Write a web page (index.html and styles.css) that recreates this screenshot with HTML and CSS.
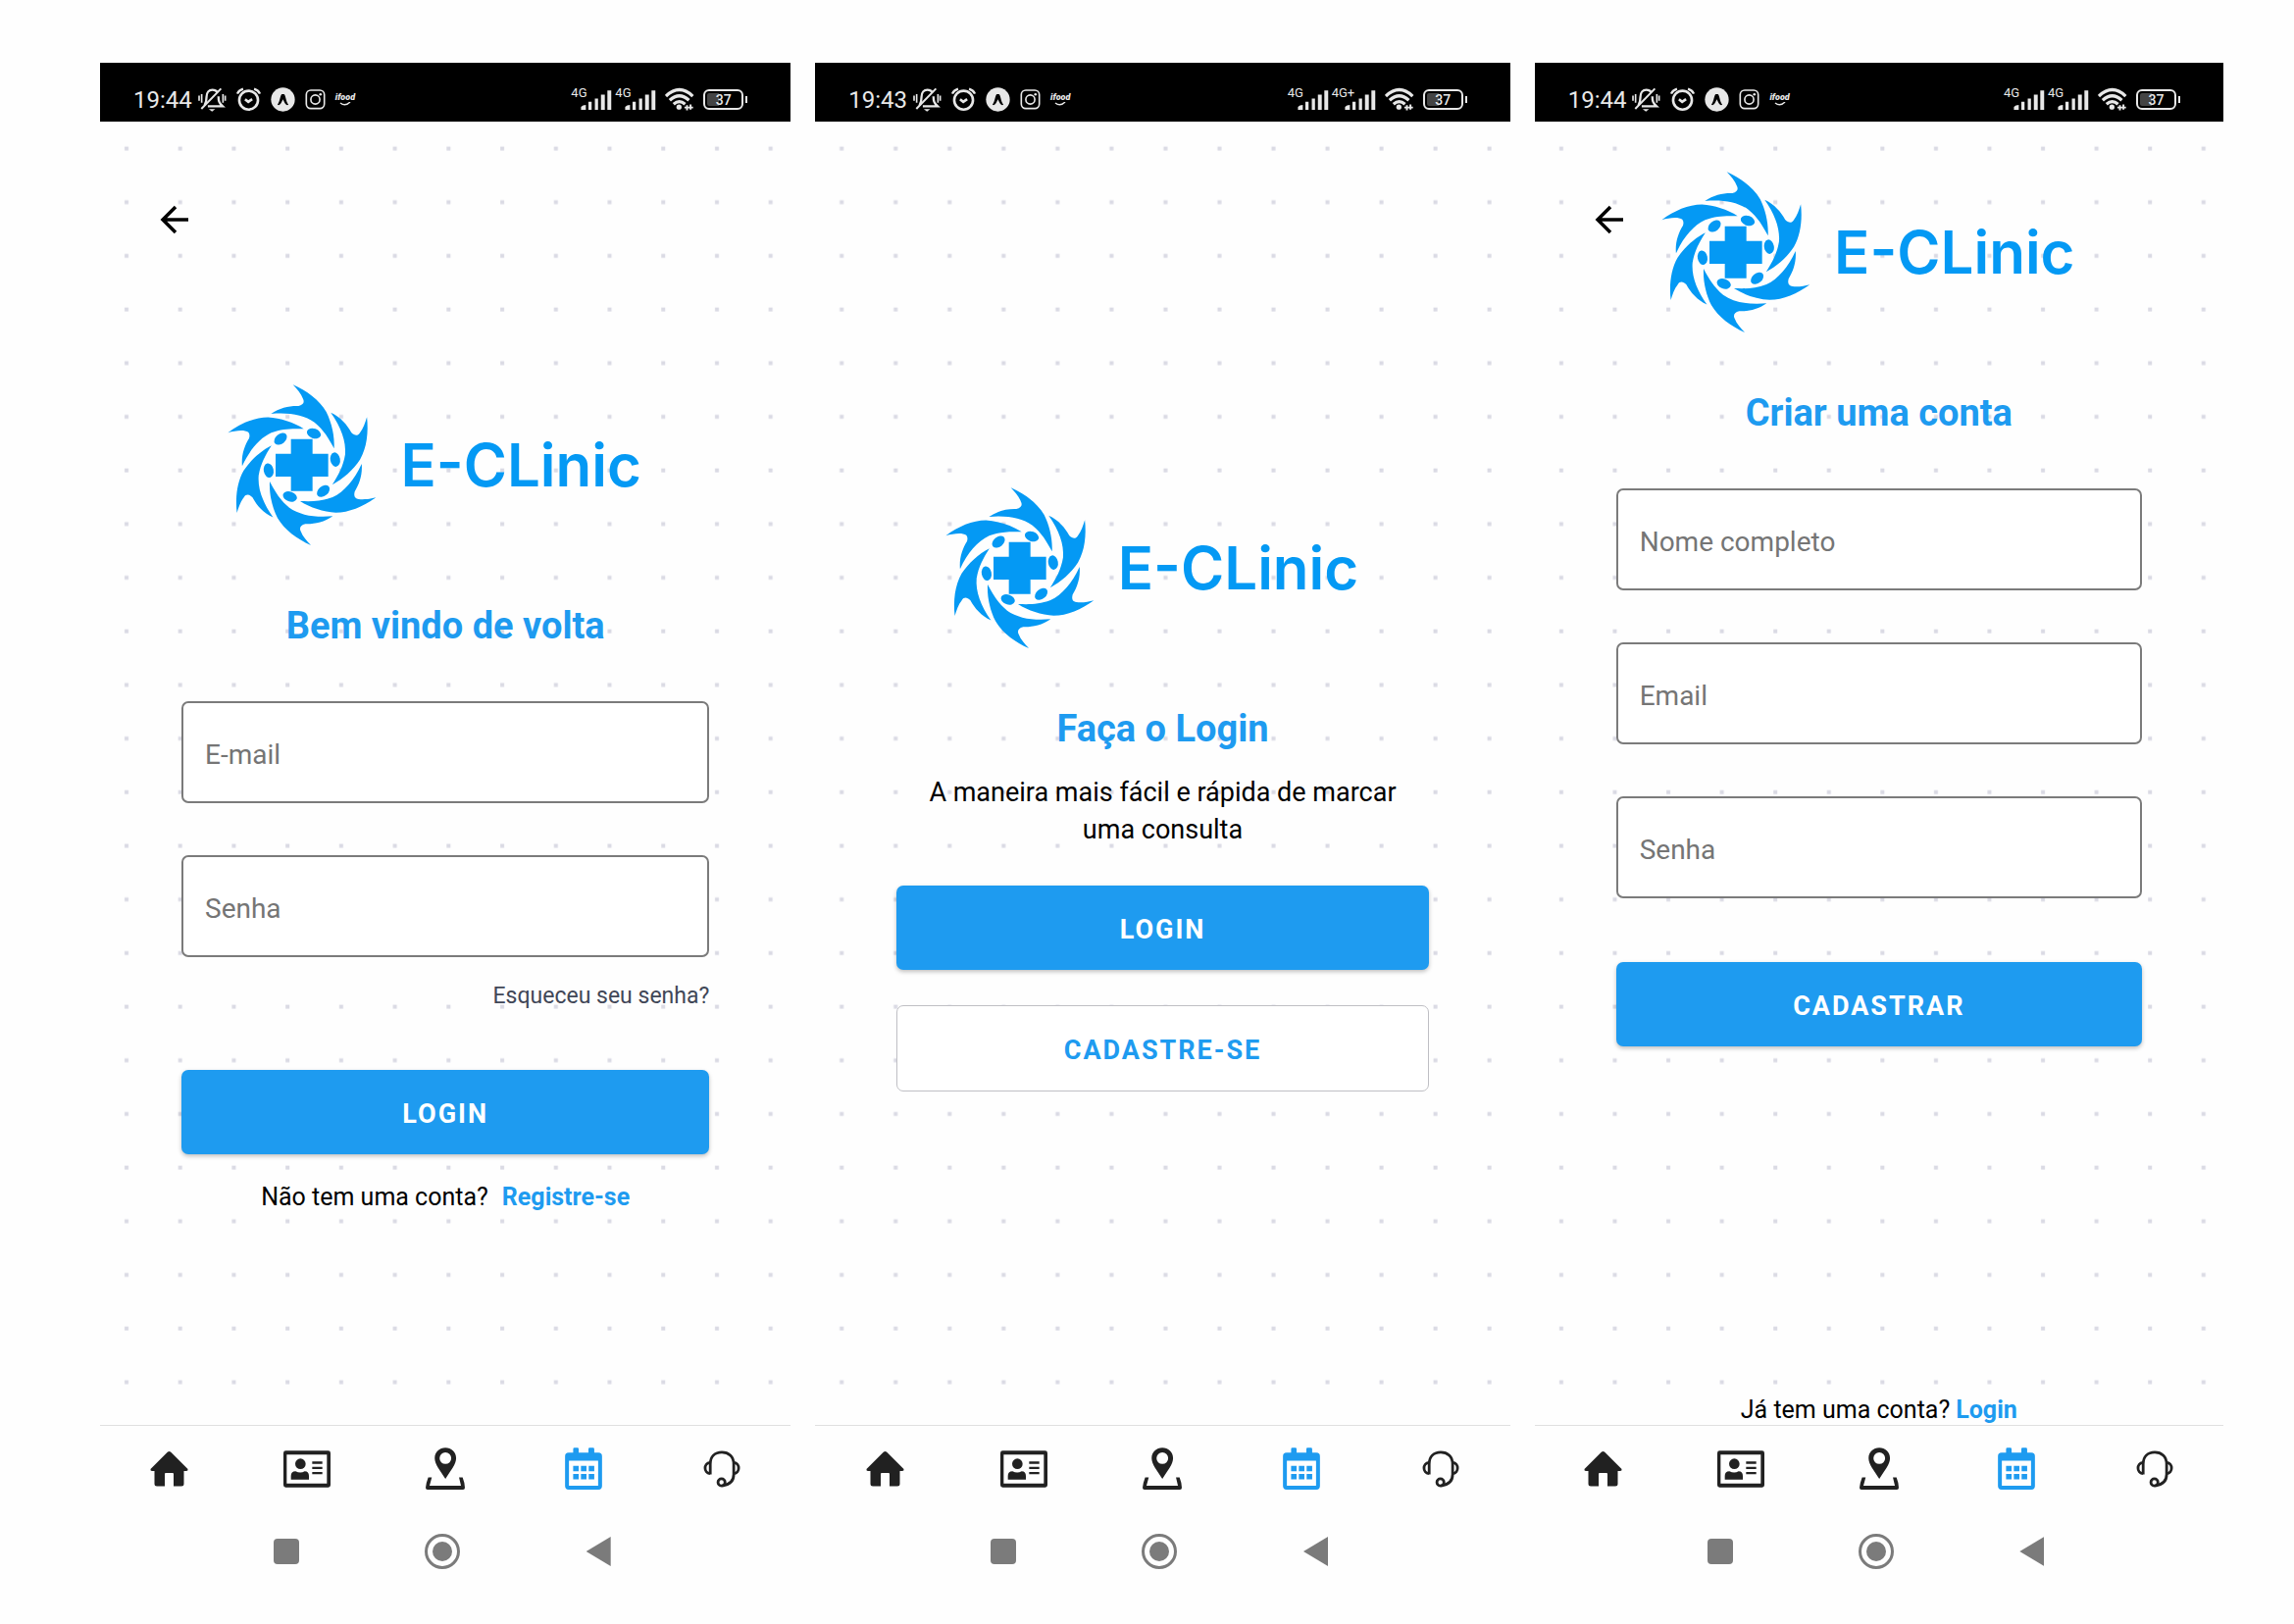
FILE: index.html
```html
<!DOCTYPE html>
<html lang="pt-BR">
<head>
<meta charset="utf-8">
<meta name="viewport" content="width=device-width, initial-scale=1">
<title>E-CLinic</title>
<link rel="stylesheet" href="styles.css">
</head>
<body>
<svg class="sprite" aria-hidden="true">
  <defs>
    <g id="person">
      <path d="M245 37C288 56 326 84 347 120C364 154 373 195 371 232C354 200 340 176 311 152C278 129 232 121 178 126C205 107 235 101 262 102C277 98 281 90 276 80C270 64 257 50 245 37Z"/>
      <ellipse cx="309" cy="186" rx="22" ry="15" transform="rotate(20 309 186)"/>
    </g>
    <symbol id="mark" viewBox="46 36 454 492">
      <use href="#person"/>
      <use href="#person" transform="rotate(60 272.500 282.500)"/>
      <use href="#person" transform="rotate(120 272.500 282.500)"/>
      <use href="#person" transform="rotate(180 272.500 282.500)"/>
      <use href="#person" transform="rotate(240 272.500 282.500)"/>
      <use href="#person" transform="rotate(300 272.500 282.500)"/>
      <path d="M239 203H305V248H353V318H305V362H239V318H192V248H239Z"/>
    </symbol>
    <symbol id="bell" viewBox="216 20 88 76">
      <g fill="none" stroke="currentColor" stroke-width="7">
        <path d="M236 76C242 66 242 62 242 50C242 36 250 28 260 28C266 28 272 30 275 35M279 48C279 62 280 68 292 79H246"/>
        <path d="M226 87L287 24" stroke-width="6"/>
        <path d="M219 46V62M227 41V68M293 41V68M300 46V62" stroke-width="5"/>
      </g>
      <path d="M249 88H269L259 95Z"/>
    </symbol>
    <symbol id="alarm" viewBox="332 20 76 72">
      <g fill="none" stroke="currentColor" stroke-width="8">
        <circle cx="370" cy="58" r="29"/>
        <path d="M335 38Q340 27 353 23M405 38Q400 27 387 23" stroke-width="7"/>
        <path d="M359 55L369 63L381 55"/>
      </g>
    </symbol>
    <symbol id="expo" viewBox="434 20 72 72">
      <circle cx="470" cy="56" r="35"/>
      <path d="M454 71C462 61 462 42 467 40H473C478 42 478 61 486 71C481 75 476 69 470 55C464 69 459 75 454 71Z" fill="#000"/>
    </symbol>
    <symbol id="camera" viewBox="537 25 62 64">
      <g fill="none" stroke="currentColor" stroke-width="5">
        <rect x="540" y="28" width="56" height="57" rx="14"/>
        <circle cx="568" cy="57" r="14"/>
      </g>
      <circle cx="584" cy="41" r="4"/>
    </symbol>
    <symbol id="smile" viewBox="0 0 12 4">
      <path d="M1 1Q6 5 11 0" fill="none" stroke="currentColor" stroke-width="1.500"/>
    </symbol>
    <symbol id="bars" viewBox="55 26 95 61">
      <path d="M55 87V78Q60 72 70 72V87ZM78 62H88V87H78ZM98 52H108V87H98ZM117 40H129V87H117ZM137 27H149V87H137Z"/>
    </symbol>
    <symbol id="wifi" viewBox="310 20 92 72">
      <g fill="none" stroke="currentColor" stroke-width="10">
        <path d="M313 47Q355 7 397 47"/>
        <path d="M325 60Q355 32 385 60"/>
        <path d="M337 72Q355 56 373 72"/>
      </g>
      <circle cx="354" cy="81" r="8"/>
      <path d="M376 75H382V91H376ZM387 73H393V89H387ZM371 80H398V85H371Z"/>
    </symbol>
    <symbol id="back" viewBox="0 0 30 30">
      <path d="M29 15H3M16 2L3 15L16 28" fill="none" stroke="currentColor" stroke-width="3.500"/>
    </symbol>
    <symbol id="home" viewBox="0 0 39 36">
      <path d="M19.500 0Q21 0 22.500 2L38.500 18Q39 20 37 20H34.500V33Q34.500 35.500 32 35.500H24V23Q24 22 23 22H16Q15 22 15 23V35.500H7Q4.500 35.500 4.500 33V20H2Q0 20 .500 18L16.500 2Q18 0 19.500 0Z"/>
    </symbol>
    <symbol id="card" viewBox="57 41 144 112">
      <path fill-rule="evenodd" d="M64 41H194Q201 41 201 48V146Q201 153 194 153H64Q57 153 57 146V48Q57 41 64 41ZM67 53V141H190V53Z"/>
      <circle cx="109" cy="81" r="16"/>
      <path d="M80 129V118Q80 104 94 104Q109 111 122 104Q135 104 135 118V129ZM145 74H176V81H145ZM145 90H176V97H145ZM145 106H176V113H145Z"/>
    </symbol>
    <symbol id="pin" viewBox="489 32 121 130">
      <path fill-rule="evenodd" d="M550 33C568 33 583 46 583 65C583 84 566 103 550 129C534 103 517 84 517 65C517 46 532 33 550 33ZM550 47A18 18 0 1 0 550 83A18 18 0 1 0 550 47Z"/>
      <path d="M497 124H508L501 150H598L592 124H603Q610 142 610 156Q610 162 604 162H495Q489 162 489 156Q490 142 497 124Z"/>
    </symbol>
    <symbol id="calendar" viewBox="915 32 114 130">
      <path fill-rule="evenodd" d="M926 48H940V37Q940 33 944 33H953Q957 33 957 37V48H987V37Q987 33 991 33H1001Q1005 33 1005 37V48H1018Q1029 48 1029 59V151Q1029 162 1018 162H926Q915 162 915 151V59Q915 48 926 48ZM927 73V150H1017V73Z"/>
      <path d="M940 89H957V105H940ZM964 89H981V105H964ZM988 89H1005V105H988ZM940 114H957V130H940ZM964 114H981V130H964ZM988 114H1005V130H988Z"/>
    </symbol>
    <symbol id="headset" viewBox="1337 39 116 116">
      <g fill="none" stroke="currentColor" stroke-width="8.500">
        <path d="M1359 114V82C1359 58 1374 45 1395 45C1416 45 1432 58 1432 82V114C1432 134 1420 146 1396 149"/>
        <path d="M1358 77C1338 79 1338 109 1358 111M1433 77C1452 79 1452 109 1433 111"/>
        <circle cx="1394" cy="138" r="11"/>
      </g>
    </symbol>
    <pattern id="dots" width="54.700" height="54.690" patternUnits="userSpaceOnUse">
      <rect x="25" y="25.500" width="4" height="4" fill="#dadae4"/>
    </pattern>
  </defs>
</svg>

<main class="gallery">
  <section class="phone" aria-label="Entrar">
    <header class="status">
      <div class="status-left">
        <time>19:44</time>
        <svg class="i-bell"><use href="#bell"/></svg>
        <svg class="i-alarm"><use href="#alarm"/></svg>
        <svg class="i-alarm"><use href="#expo"/></svg>
        <svg class="i-camera"><use href="#camera"/></svg>
        <div class="ifood"><span>ifood</span><svg><use href="#smile"/></svg></div>
      </div>
      <div class="status-right">
        <div class="signals">
          <div class="signal"><span>4G</span><svg><use href="#bars"/></svg></div>
          <div class="signal"><span>4G</span><svg><use href="#bars"/></svg></div>
        </div>
        <svg class="i-wifi"><use href="#wifi"/></svg>
        <div class="battery">37</div>
      </div>
    </header>
    <div class="screen screen-login">
      <svg class="dots" viewBox="0 0 704 1329" preserveAspectRatio="none"><rect width="704" height="1329" fill="url(#dots)"/></svg>
      <button class="back" type="button" aria-label="Voltar"><svg><use href="#back"/></svg></button>
      <div class="logo"><svg><use href="#mark"/></svg><span>E-CLinic</span></div>
      <h1>Bem vindo de volta</h1>
      <form class="form">
        <div class="field">
          <input id="login-email" type="email" placeholder=" ">
          <label for="login-email">E-mail</label>
        </div>
        <div class="field">
          <input id="login-password" type="password" placeholder=" ">
          <label for="login-password">Senha</label>
        </div>
        <a class="forgot" href="#">Esqueceu seu senha?</a>
        <button class="btn btn-login" type="submit">LOGIN</button>
      </form>
      <p class="switch switch-wide">Não tem uma conta? <a href="#">Registre-se</a></p>
    </div>
    <nav class="tabs">
      <a href="#" aria-label="Início"><svg class="t-home"><use href="#home"/></svg></a>
      <a href="#" aria-label="Perfil"><svg class="t-card"><use href="#card"/></svg></a>
      <a href="#" aria-label="Locais"><svg class="t-pin"><use href="#pin"/></svg></a>
      <a href="#" aria-label="Agenda" class="active"><svg class="t-calendar"><use href="#calendar"/></svg></a>
      <a href="#" aria-label="Suporte"><svg class="t-headset"><use href="#headset"/></svg></a>
    </nav>
    <footer class="system">
      <button type="button" aria-label="Recentes"><span class="recent"></span></button>
      <button type="button" aria-label="Tela inicial"><span class="circle"></span></button>
      <button type="button" aria-label="Retornar"><span class="triangle"></span></button>
    </footer>
  </section>

  <section class="phone" aria-label="Boas-vindas">
    <header class="status">
      <div class="status-left">
        <time>19:43</time>
        <svg class="i-bell"><use href="#bell"/></svg>
        <svg class="i-alarm"><use href="#alarm"/></svg>
        <svg class="i-alarm"><use href="#expo"/></svg>
        <svg class="i-camera"><use href="#camera"/></svg>
        <div class="ifood"><span>ifood</span><svg><use href="#smile"/></svg></div>
      </div>
      <div class="status-right">
        <div class="signals">
          <div class="signal"><span>4G</span><svg><use href="#bars"/></svg></div>
          <div class="signal signal-plus"><span>4G+</span><svg><use href="#bars"/></svg></div>
        </div>
        <svg class="i-wifi"><use href="#wifi"/></svg>
        <div class="battery">37</div>
      </div>
    </header>
    <div class="screen screen-welcome">
      <svg class="dots" viewBox="0 0 704 1329" preserveAspectRatio="none"><rect width="704" height="1329" fill="url(#dots)"/></svg>
      <div class="logo"><svg><use href="#mark"/></svg><span>E-CLinic</span></div>
      <h1>Faça o Login</h1>
      <p class="intro">A maneira mais fácil e rápida de marcar uma consulta</p>
      <div class="actions">
        <button class="btn" type="button">LOGIN</button>
        <button class="btn btn-outline" type="button">CADASTRE-SE</button>
      </div>
    </div>
    <nav class="tabs">
      <a href="#" aria-label="Início"><svg class="t-home"><use href="#home"/></svg></a>
      <a href="#" aria-label="Perfil"><svg class="t-card"><use href="#card"/></svg></a>
      <a href="#" aria-label="Locais"><svg class="t-pin"><use href="#pin"/></svg></a>
      <a href="#" aria-label="Agenda" class="active"><svg class="t-calendar"><use href="#calendar"/></svg></a>
      <a href="#" aria-label="Suporte"><svg class="t-headset"><use href="#headset"/></svg></a>
    </nav>
    <footer class="system">
      <button type="button" aria-label="Recentes"><span class="recent"></span></button>
      <button type="button" aria-label="Tela inicial"><span class="circle"></span></button>
      <button type="button" aria-label="Retornar"><span class="triangle"></span></button>
    </footer>
  </section>

  <section class="phone" aria-label="Cadastro">
    <header class="status">
      <div class="status-left">
        <time>19:44</time>
        <svg class="i-bell"><use href="#bell"/></svg>
        <svg class="i-alarm"><use href="#alarm"/></svg>
        <svg class="i-alarm"><use href="#expo"/></svg>
        <svg class="i-camera"><use href="#camera"/></svg>
        <div class="ifood"><span>ifood</span><svg><use href="#smile"/></svg></div>
      </div>
      <div class="status-right">
        <div class="signals">
          <div class="signal"><span>4G</span><svg><use href="#bars"/></svg></div>
          <div class="signal"><span>4G</span><svg><use href="#bars"/></svg></div>
        </div>
        <svg class="i-wifi"><use href="#wifi"/></svg>
        <div class="battery">37</div>
      </div>
    </header>
    <div class="screen screen-register">
      <svg class="dots" viewBox="0 0 704 1329" preserveAspectRatio="none"><rect width="704" height="1329" fill="url(#dots)"/></svg>
      <button class="back" type="button" aria-label="Voltar"><svg><use href="#back"/></svg></button>
      <div class="logo"><svg><use href="#mark"/></svg><span>E-CLinic</span></div>
      <h1>Criar uma conta</h1>
      <form class="form">
        <div class="field">
          <input id="new-name" type="text" placeholder=" ">
          <label for="new-name">Nome completo</label>
        </div>
        <div class="field">
          <input id="new-email" type="email" placeholder=" ">
          <label for="new-email">Email</label>
        </div>
        <div class="field">
          <input id="new-password" type="password" placeholder=" ">
          <label for="new-password">Senha</label>
        </div>
        <button class="btn btn-register" type="submit">CADASTRAR</button>
      </form>
      <p class="switch switch-bottom">Já tem uma conta? <a href="#">Login</a></p>
    </div>
    <nav class="tabs">
      <a href="#" aria-label="Início"><svg class="t-home"><use href="#home"/></svg></a>
      <a href="#" aria-label="Perfil"><svg class="t-card"><use href="#card"/></svg></a>
      <a href="#" aria-label="Locais"><svg class="t-pin"><use href="#pin"/></svg></a>
      <a href="#" aria-label="Agenda" class="active"><svg class="t-calendar"><use href="#calendar"/></svg></a>
      <a href="#" aria-label="Suporte"><svg class="t-headset"><use href="#headset"/></svg></a>
    </nav>
    <footer class="system">
      <button type="button" aria-label="Recentes"><span class="recent"></span></button>
      <button type="button" aria-label="Tela inicial"><span class="circle"></span></button>
      <button type="button" aria-label="Retornar"><span class="triangle"></span></button>
    </footer>
  </section>
</main>
</body>
</html>
```
FILE: styles.css
```css
:root {
  --blue: #1e9bf0;
  --logo: #0499f4;
  --ink: #212121;
}

* {
  box-sizing: border-box;
}

body {
  margin: 0;
  background: #fefefe;
  color: #000;
  font-family: Roboto, "Liberation Sans", sans-serif;
}

svg {
  display: block;
  fill: currentColor;
}

button {
  border: 0;
  padding: 0;
  background: none;
  font: inherit;
  color: inherit;
}

a {
  color: inherit;
  text-decoration: none;
}

h1,
p {
  margin: 0;
}

.sprite {
  position: absolute;
  width: 0;
  height: 0;
}

.gallery {
  display: grid;
  grid-template-columns: 704fr 708fr 702fr;
  column-gap: 25px;
  min-height: 100vh;
  padding: 64px 72px 33px 102px;
}

.phone {
  display: flex;
  flex-direction: column;
}

/* Status bar */
.status {
  display: flex;
  align-items: flex-end;
  justify-content: space-between;
  height: 60px;
  padding: 0 43px 11px 34px;
  background: #000;
  color: #e8e8e8;
}

.status-left,
.status-right {
  display: flex;
  align-items: center;
  height: 24px;
}

.status-left {
  gap: 10px;
}

.status-right {
  gap: 9px;
}

.status time {
  margin-right: -4px;
  padding-top: 2px;
  font-size: 24px;
  line-height: 28px;
}

.i-bell {
  width: 29px;
  height: 25px;
}

.i-alarm {
  width: 25px;
  height: 25px;
}

.i-camera {
  width: 21px;
  height: 21px;
}

.ifood {
  display: flex;
  flex-direction: column;
  align-items: center;
  font-size: 9px;
  line-height: 9px;
  font-weight: 900;
  font-style: italic;
}

.ifood svg {
  width: 12px;
  height: 4px;
}

.signals {
  display: flex;
  gap: 3px;
}

.signal {
  position: relative;
  padding: 2px 0 0 10px;
}

.signal-plus {
  padding-left: 13px;
}

.signal span {
  position: absolute;
  top: -2px;
  left: 0;
  font-size: 13px;
  line-height: 13px;
}

.signal svg {
  width: 32px;
  height: 20px;
}

.i-wifi {
  width: 30px;
  height: 24px;
}

/* Charge level is the grey part of the fill; the contact sits on the right */
.battery {
  position: relative;
  width: 41px;
  height: 21px;
  margin-right: 5px;
  border: 2px solid currentColor;
  border-radius: 6px;
  background: linear-gradient(90deg, #444 12px, #000 12px) content-box;
  padding: 2px;
  font-size: 14px;
  line-height: 14px;
  font-weight: 500;
  text-align: center;
}

.battery::after {
  content: "";
  position: absolute;
  top: 5px;
  right: -6px;
  width: 2px;
  height: 7px;
  background: currentColor;
}

/* Screen */
.screen {
  position: relative;
  z-index: 0;
  flex: 1;
  display: flex;
  flex-direction: column;
  padding: 0 83px;
}

.screen-login {
  padding-top: 268px;
}

.screen-welcome {
  padding-top: 373px;
}

.screen-register {
  padding-top: 51px;
}

.dots {
  position: absolute;
  inset: 0;
  z-index: -1;
  width: 100%;
  height: 100%;
}

.back {
  position: absolute;
  top: 85px;
  left: 61px;
}

.back svg {
  width: 30px;
  height: 30px;
}

.logo {
  display: flex;
  align-items: center;
  justify-content: center;
  gap: 24px;
  padding-right: 22px;
  color: var(--logo);
}

.logo svg {
  width: 152px;
  height: 164px;
}

.logo span {
  font-family: Inter, Roboto, sans-serif;
  font-size: 60px;
  line-height: 70px;
  font-weight: 600;
}

h1 {
  margin: 60px 0 55px;
  font-size: 38px;
  line-height: 44px;
  font-weight: 700;
  text-align: center;
  color: var(--blue);
}

.screen-welcome h1 {
  margin-bottom: 24px;
}

.form {
  display: flex;
  flex-direction: column;
}

.field {
  display: grid;
}

.field + .field {
  margin-top: 53px;
}

.field input,
.field label {
  grid-area: 1 / 1;
}

.field input {
  width: 100%;
  height: 104px;
  padding: 0 24px;
  border: 2px solid #7b7b7b;
  border-radius: 7px;
  background: #fff;
  font: 28px/34px Roboto, "Liberation Sans", sans-serif;
  color: #000;
}

.field label {
  align-self: center;
  justify-self: start;
  padding: 5px 0 0 24px;
  font-size: 28px;
  line-height: 34px;
  color: #757575;
  pointer-events: none;
}

.field input:not(:placeholder-shown) + label {
  visibility: hidden;
}

.forgot {
  align-self: flex-end;
  margin-top: 26px;
  font-size: 23px;
  line-height: 27px;
  color: #414757;
}

.btn {
  height: 86px;
  padding-top: 4px;
  border-radius: 7px;
  background: var(--blue);
  box-shadow: 0 2px 4px rgba(0, 0, 0, 0.25);
  font-size: 27px;
  line-height: 38px;
  font-weight: 700;
  letter-spacing: 2px;
  color: #fff;
}

.btn-outline {
  height: 88px;
  border: 1px solid #bfbfc4;
  background: #fff;
  box-shadow: none;
  color: var(--blue);
}

.btn-login {
  margin-top: 62px;
}

.btn-register {
  margin-top: 65px;
}

.switch {
  display: flex;
  justify-content: center;
  gap: 6px;
  font-size: 25px;
  line-height: 30px;
}

.switch a {
  font-weight: 700;
  color: var(--blue);
}

.switch-wide {
  gap: 14px;
  margin-top: 29px;
}

.switch-bottom {
  margin-top: auto;
}

.intro {
  padding: 0 12px;
  font-size: 27px;
  line-height: 38px;
  text-align: center;
}

.actions {
  display: flex;
  flex-direction: column;
  gap: 36px;
  margin-top: 38px;
}

/* Bottom navigation */
.tabs {
  display: grid;
  grid-template-columns: repeat(5, 1fr);
  height: 88px;
  border-top: 1px solid #e0e0e0;
  background: #fefefe;
  color: var(--ink);
}

.tabs a {
  display: flex;
  align-items: center;
  justify-content: center;
}

.tabs .active {
  color: var(--blue);
}

.t-home {
  width: 39px;
  height: 36px;
}

.t-card {
  width: 48px;
  height: 38px;
}

.t-pin {
  width: 40px;
  height: 43px;
}

.t-calendar {
  width: 38px;
  height: 43px;
}

.t-headset {
  width: 38px;
  height: 38px;
}

.system {
  display: flex;
  justify-content: center;
  height: 82px;
  padding-right: 6px;
}

.system button {
  display: flex;
  align-items: center;
  justify-content: center;
  width: 159px;
}

.recent {
  width: 26px;
  height: 26px;
  border-radius: 4px;
  background: #7b7b7b;
}

.circle {
  width: 36px;
  height: 36px;
  border: 3px solid #7b7b7b;
  border-radius: 50%;
  padding: 5px;
  background: #7b7b7b content-box;
}

.triangle {
  width: 25px;
  height: 30px;
  background: #7b7b7b;
  clip-path: polygon(100% 0, 100% 100%, 0 50%);
}
```
